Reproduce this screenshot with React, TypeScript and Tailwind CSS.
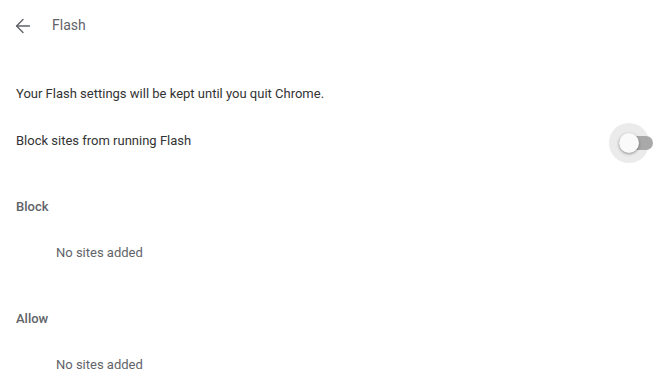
import { ArrowLeft } from 'lucide-react';

function Toggle() {
  return (
    <div className="relative w-[40px] h-[40px] mt-[3px]">
      <div className="absolute inset-0 rounded-full bg-[#ebebeb]" />
      <div className="absolute left-[10px] top-[13px] w-[34px] h-[14px] rounded-full bg-[#a9a9a9]" />
      <div className="absolute left-[10px] top-[10px] w-[20px] h-[20px] rounded-full bg-[#fafafa] shadow-[0_1px_3px_rgba(0,0,0,0.4)]" />
    </div>
  );
}

function SiteList({ title }: { title: string }) {
  return (
    <div>
      <div className="h-[48px] flex items-center px-4 font-medium text-[#5f6368]">{title}</div>
      <div className="h-[44px] flex items-center pl-[56px] text-[#5f6368]">No sites added</div>
    </div>
  );
}

export default function App() {
  return (
    <div
      className="w-[670px] h-[382px] bg-white text-[13px] text-[#333] overflow-hidden"
      style={{ fontFamily: 'Roboto, "Liberation Sans", sans-serif' }}
    >
      <div className="h-[50px] flex items-center pl-3 pt-px">
        <ArrowLeft className="w-[22px] h-[22px] text-[#5f6368]" strokeWidth={1.5} />
        <span className="ml-[18px] text-[14px] text-[#5f6368]">Flash</span>
      </div>
      <div className="mt-[21px] h-[46px] flex items-center px-4">
        Your Flash settings will be kept until you quit Chrome.
      </div>
      <div className="h-[48px] flex items-center justify-between pl-4 pr-[21px]">
        <span>Block sites from running Flash</span>
        <Toggle />
      </div>
      <div className="mt-[18px]">
        <SiteList title="Block" />
      </div>
      <div className="mt-[20px]">
        <SiteList title="Allow" />
      </div>
    </div>
  );
}
